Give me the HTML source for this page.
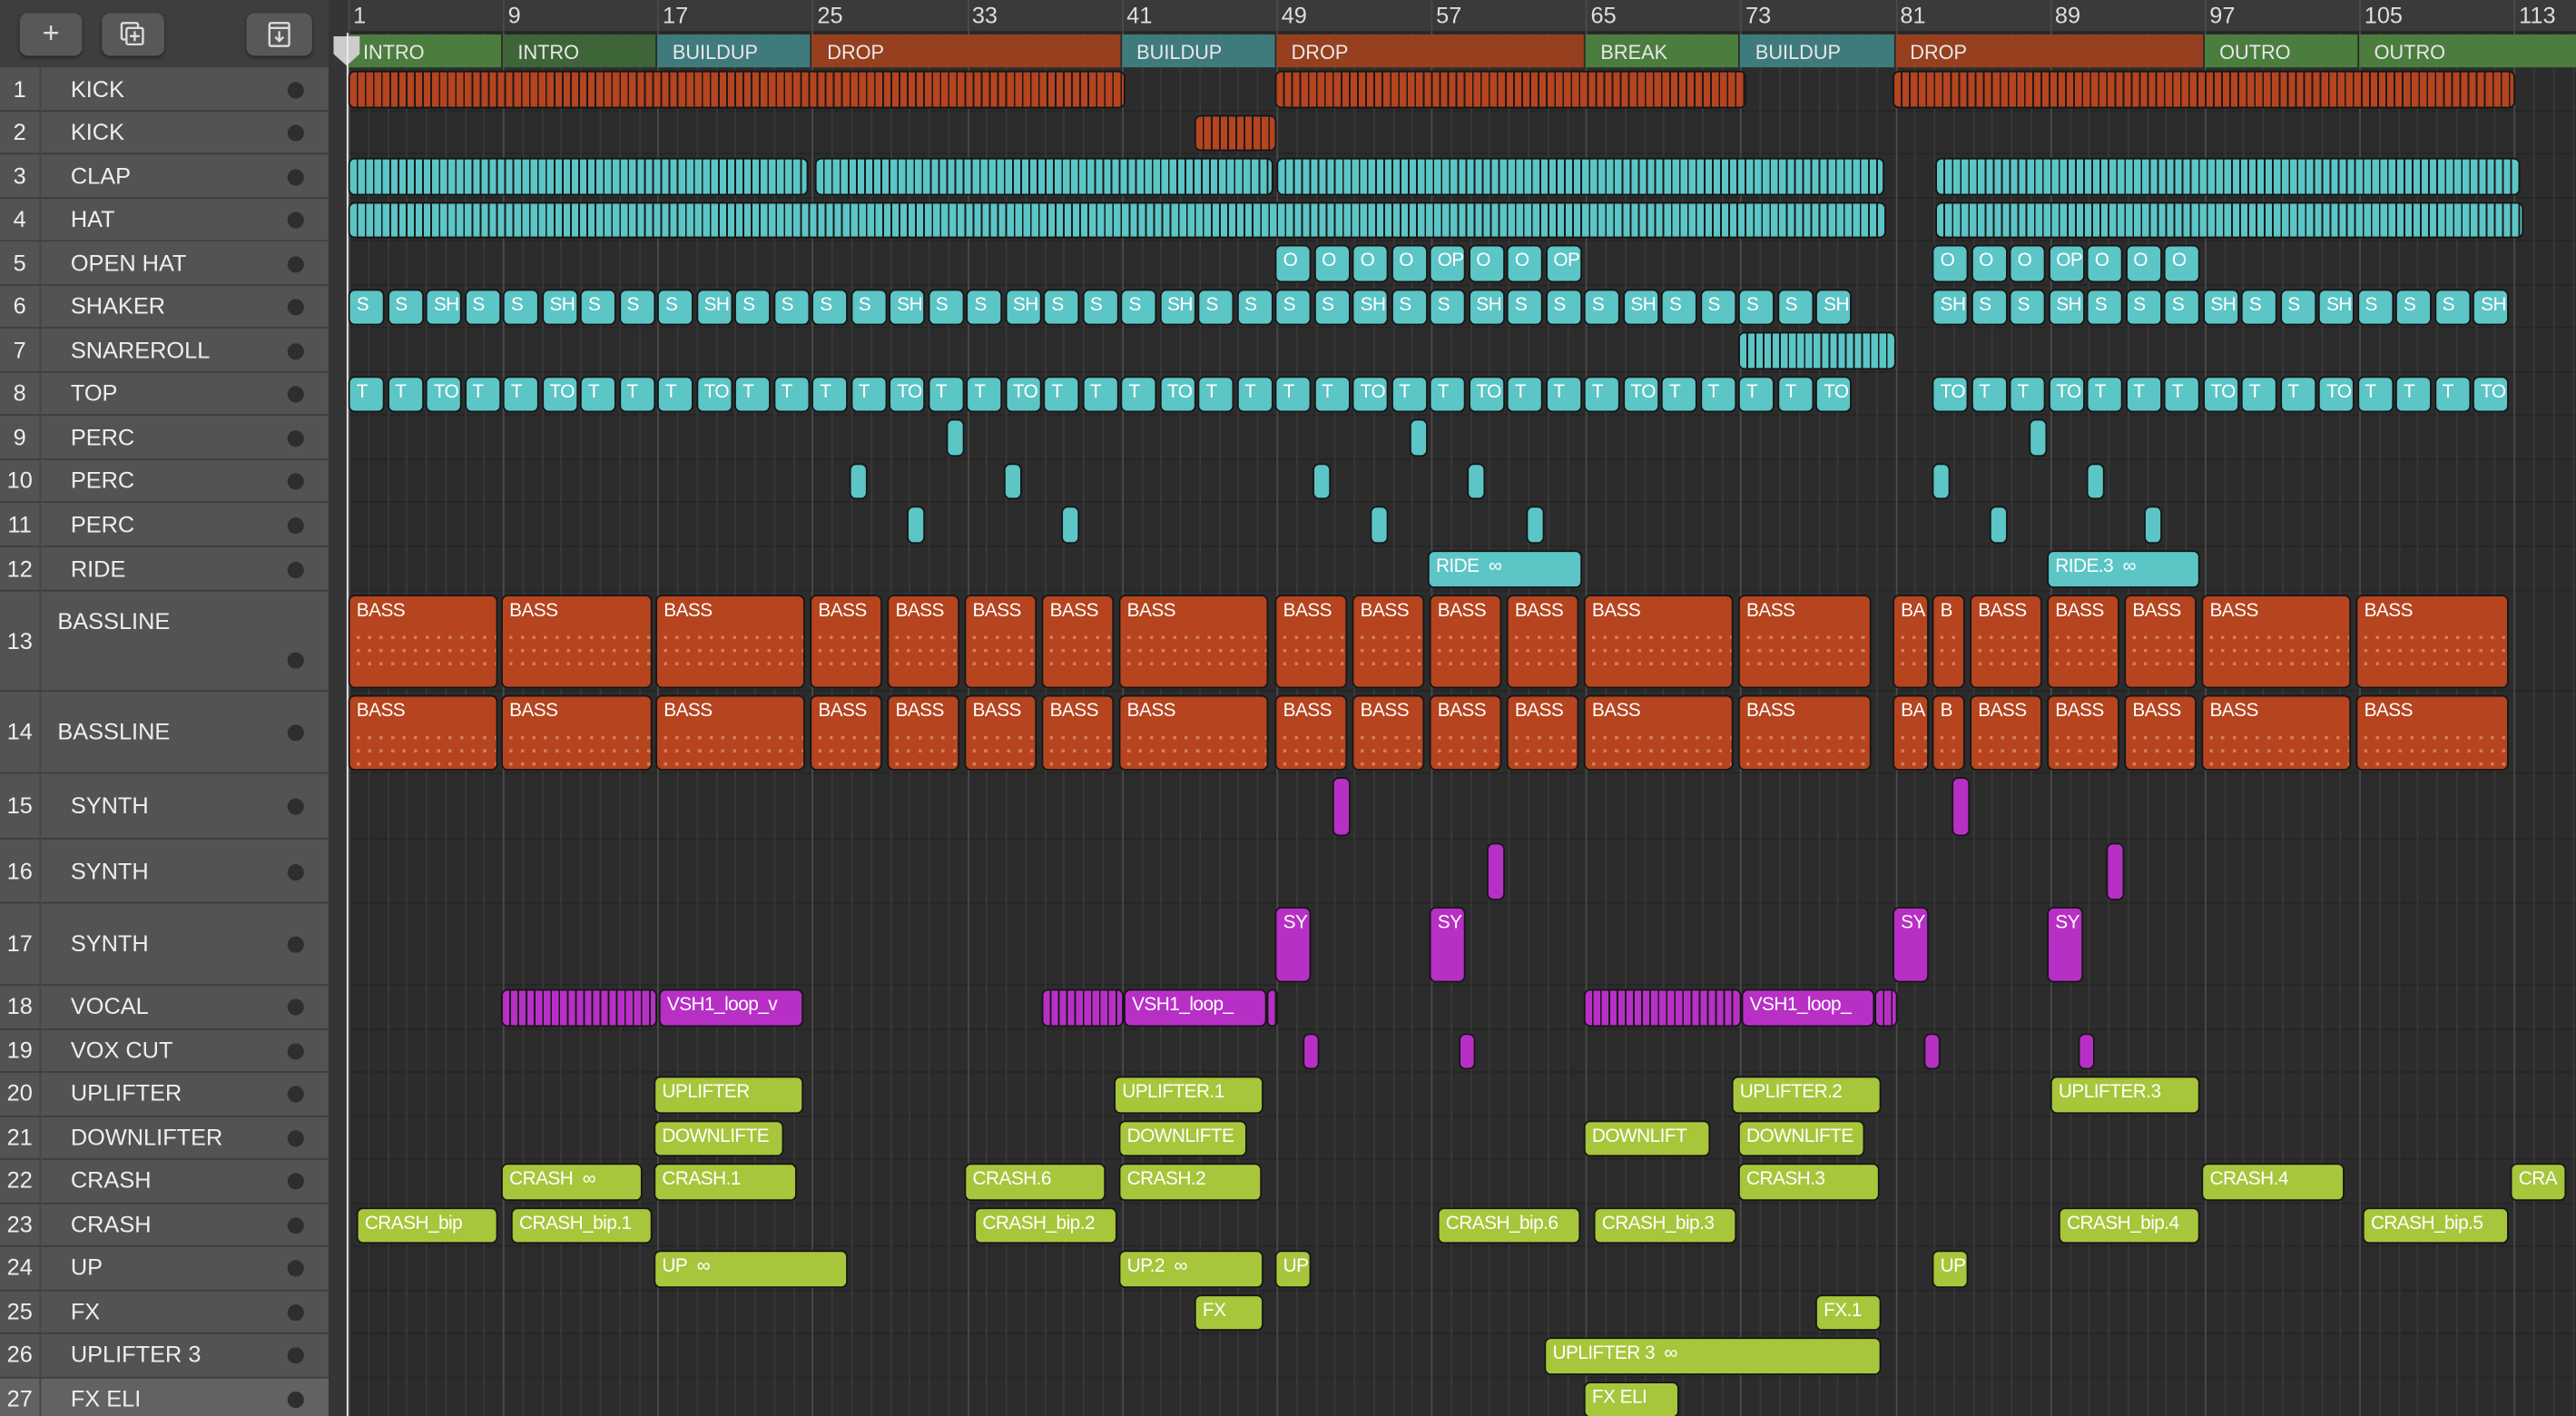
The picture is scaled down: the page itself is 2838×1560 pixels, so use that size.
<!DOCTYPE html>
<html><head><meta charset="utf-8"><style>
html,body{margin:0;padding:0;background:#2b2b2b;overflow:hidden;width:2838px;height:1560px}
#w{position:absolute;left:0;top:0;width:1568px;height:862px;transform:scale(1.81);transform-origin:0 0;font-family:"Liberation Sans",sans-serif;background:#2c2c2c;overflow:hidden}
.a{position:absolute;box-sizing:border-box}
.tn{color:#eee;font-size:14px}
.c{position:absolute;box-sizing:border-box;border:1px solid #161616;border-radius:4px;color:#fff;font-size:11.5px;letter-spacing:-0.3px;padding:2px 0 0 4px;white-space:nowrap;overflow:hidden;line-height:14px}
.btn{position:absolute;top:8px;height:26px;background:#585858;border-radius:5px;box-shadow:0 1px 2px #222;color:#ddd;text-align:center;font-size:18px;line-height:25px}
</style></head><body><div id="w">
<div class="a" style="left:0;top:0;width:200px;height:42px;background:#3e3e3e"></div>
<div class="btn" style="left:12px;width:38px">+</div>
<div class="btn" style="left:62px;width:38px"><svg width="18" height="16" viewBox="0 0 18 16" style="margin-top:5px"><rect x="2" y="1" width="10" height="10" rx="1" fill="none" stroke="#ddd" stroke-width="1.3"/><rect x="5" y="4" width="10" height="10" rx="1" fill="#585858" stroke="#ddd" stroke-width="1.3"/><path d="M10 6v6M7 9h6" stroke="#ddd" stroke-width="1.3"/></svg></div>
<div class="btn" style="left:150px;width:40px"><svg width="16" height="16" viewBox="0 0 16 16" style="margin-top:5px"><rect x="2" y="1" width="12" height="14" rx="1" fill="none" stroke="#ddd" stroke-width="1.3"/><path d="M2 4h12M8 6v6M5.5 9.5L8 12l2.5-2.5" fill="none" stroke="#ddd" stroke-width="1.3"/></svg></div>
<div class="a" style="left:200px;top:0;width:12px;height:862px;background:#353535"></div>
<div class="a" style="left:212px;top:0;width:1356px;height:20px;background:#3a3a3a;border-bottom:1px solid #222"></div>
</div>
<script>
const W=document.getElementById('w');
function el(h){W.insertAdjacentHTML('beforeend',h);}
const bx=b=>212+(b-1)*11.77;
const rows=[[1,'KICK',41,68],[2,'KICK',68,94],[3,'CLAP',94,121],[4,'HAT',121,147],[5,'OPEN HAT',147,174],[6,'SHAKER',174,200],[7,'SNAREROLL',200,227],[8,'TOP',227,253],[9,'PERC',253,280],[10,'PERC',280,306],[11,'PERC',306,333],[12,'RIDE',333,360],[13,'BASSLINE',360,421],[14,'BASSLINE',421,471],[15,'SYNTH',471,511],[16,'SYNTH',511,550],[17,'SYNTH',550,600]];
let y=600;const more=['VOCAL','VOX CUT','UPLIFTER','DOWNLIFTER','CRASH','CRASH','UP','FX','UPLIFTER 3','FX ELI'];
more.forEach((n,i)=>{rows.push([18+i,n,y,y+26.5]);y+=26.5;});
const R={};
rows.forEach(r=>{R[r[0]]=[r[2],r[3]];const h=r[3]-r[2];const ly=r[0]==13?(r[2]+10):(r[2]+h/2-9);
el(`<div class="a" style="left:0;top:${r[2]}px;width:200px;height:${h}px;background:${r[0]==27?'#626262':'#535353'};border-bottom:1px solid #3e3e3e"></div>
<div class="a" style="left:24px;top:${r[2]}px;width:1px;height:${h}px;background:#444"></div>
<div class="a tn" style="left:0;width:24px;text-align:center;top:${r[2]+h/2-9}px">${r[0]}</div>
<div class="a tn" style="left:${r[0]==13||r[0]==14?35:43}px;top:${ly}px">${r[1]}</div>
<div class="a" style="left:175px;top:${(r[0]==13?r[3]-24:r[2]+h/2-5)}px;width:10px;height:10px;border-radius:50%;background:#2e2e2e"></div>
<div class="a" style="left:212px;top:${r[3]-1}px;width:1356px;height:1px;background:#252525"></div>`);});
for(let b=1;b<=116;b++){const x=bx(b);el(`<div class="a" style="left:${x}px;top:${b%8==1?0:20}px;width:1px;height:862px;background:${b%8==1?'#4a4a4a':'#383838'}"></div>`);
if(b%8==1)el(`<div class="a" style="left:${x+3}px;top:1px;color:#ddd;font-size:14px">${b}</div>`);}
const sec=[[1,9,'INTRO','#4b7d3e'],[9,17,'INTRO','#3d6537'],[17,25,'BUILDUP','#3f7b7c'],[25,41,'DROP','#97401f'],[41,49,'BUILDUP','#3f7b7c'],[49,65,'DROP','#97401f'],[65,73,'BREAK','#4b7d3e'],[73,81,'BUILDUP','#3f7b7c'],[81,97,'DROP','#97401f'],[97,105,'OUTRO','#4b7d3e'],[105,117,'OUTRO','#4b7d3e']];
sec.forEach(s=>{const x=bx(s[0]),w=bx(s[1])-x;el(`<div class="a" style="left:${x}px;top:21px;width:${w}px;height:20px;background:${s[3]};border-right:1px solid #2a2a2a;color:#e8e8e8;font-size:12px;padding:4px 0 0 9px;white-space:nowrap;overflow:hidden">${s[2]}</div>`);});
el(`<div class="a" style="left:203px;top:22px;width:16px;height:18px;background:#ccc;clip-path:polygon(0 0,100% 0,100% 60%,50% 100%,0 60%)"></div><div class="a" style="left:211px;top:20px;width:1px;height:842px;background:#eee"></div>`);
const C={o:'#b5441f',c:'#5cc5c6',m:'#b82fc6',l:'#a7c63b'};
function clip(r,x1,x2,col,lab,stripes){const [t,b]=R[r];let s='';
if(stripes){s=`background:repeating-linear-gradient(90deg,${C[col]} 0 4px,#1a1a1a 4px 5px);`}else s=`background:${C[col]};`;
el(`<div class="c" style="left:${x1}px;top:${t+2}px;width:${x2-x1}px;height:${b-t-4}px;${s}">${lab||''}</div>`);}
[[212,685],[776,1063],[1152,1531]].forEach(a=>clip(1,a[0],a[1],'o','',1));clip(2,727,777,'o','',1);
[[212,492],[496,775],[777,1147],[1178,1534]].forEach(a=>clip(3,a[0],a[1],'c','',1));
[[212,1148],[1178,1536]].forEach(a=>clip(4,a[0],a[1],'c','',1));
clip(7,1058,1154,'c','',1);
const oh=['O','O','O','O','OP','O','O','OP'];oh.forEach((l,i)=>clip(5,776+i*23.5,776+i*23.5+22,'c',l));
['O','O','O','OP','O','O','O'].forEach((l,i)=>clip(5,1176+i*23.5,1176+i*23.5+22,'c',l));
function seq(r,x1,x2,pat){let i=0;for(let x=x1;x+20<x2+2;x+=23.5,i++)clip(r,x,x+22,'c',pat[i%pat.length]);}
seq(6,212,1138,['S','S','SH','S','S','SH','S','S','S','SH','S','S']);seq(6,1176,1528,['SH','S','S','SH','S','S','S']);
seq(8,212,1138,['T','T','TO','T','T','TO','T','T','T','TO','T','T']);seq(8,1176,1528,['TO','T','T','TO','T','T','T']);
[576,858,1235].forEach(x=>clip(9,x,x+11,'c'));[517,611,799,893,1176,1270].forEach(x=>clip(10,x,x+11,'c'));[552,646,834,929,1211,1305].forEach(x=>clip(11,x,x+11,'c'));
clip(12,869,963,'c','RIDE&nbsp; ∞');clip(12,1246,1339,'c','RIDE.3&nbsp; ∞');
const bass=[[212,303],[305,397],[399,490],[493,537],[540,584],[587,631],[634,678],[681,772],[776,820],[823,867],[870,914],[917,961],[964,1055],[1058,1139],[1152,1174,'BA'],[1176,1196,'B'],[1199,1243],[1246,1290],[1293,1337],[1340,1431],[1434,1527]];
const dots='<div style="margin-top:8px;height:20px;background:repeating-linear-gradient(90deg,#f0a080 0 2px,transparent 2px 7px);opacity:.6;-webkit-mask:repeating-linear-gradient(180deg,#000 0 2px,transparent 2px 8px)"></div>';
bass.forEach(a=>{clip(13,a[0],a[1],'o',(a[2]||'BASS')+dots);clip(14,a[0],a[1],'o',(a[2]||'BASS')+dots);});
clip(15,811,822,'m');clip(15,1188,1199,'m');clip(16,905,916,'m');clip(16,1282,1293,'m');
[776,870,1152,1246].forEach(x=>clip(17,x,x+22,'m','SY'));
clip(18,305,400,'m','',1);clip(18,401,489,'m','VSH1_loop_v');clip(18,634,684,'m','',1);clip(18,684,771,'m','VSH1_loop_');clip(18,771,778,'m','',1);
clip(18,964,1060,'m','',1);clip(18,1060,1141,'m','VSH1_loop_');clip(18,1141,1155,'m','',1);
[793,888,1171,1265].forEach(x=>clip(19,x,x+10,'m'));
[[398,489,'UPLIFTER'],[678,769,'UPLIFTER.1'],[1054,1145,'UPLIFTER.2'],[1248,1339,'UPLIFTER.3']].forEach(a=>clip(20,a[0],a[1],'l',a[2]));
[[398,477,'DOWNLIFTE'],[681,759,'DOWNLIFTE'],[964,1041,'DOWNLIFT'],[1058,1135,'DOWNLIFTE']].forEach(a=>clip(21,a[0],a[1],'l',a[2]));
[[305,391,'CRASH&nbsp; ∞'],[398,485,'CRASH.1'],[587,673,'CRASH.6'],[681,768,'CRASH.2'],[1058,1144,'CRASH.3'],[1340,1427,'CRASH.4'],[1528,1562,'CRA']].forEach(a=>clip(22,a[0],a[1],'l',a[2]));
[[217,303,'CRASH_bip'],[311,397,'CRASH_bip.1'],[593,680,'CRASH_bip.2'],[875,962,'CRASH_bip.6'],[970,1057,'CRASH_bip.3'],[1253,1339,'CRASH_bip.4'],[1438,1527,'CRASH_bip.5']].forEach(a=>clip(23,a[0],a[1],'l',a[2]));
[[398,516,'UP&nbsp; ∞'],[681,769,'UP.2&nbsp; ∞'],[776,798,'UP'],[1176,1198,'UP']].forEach(a=>clip(24,a[0],a[1],'l',a[2]));
clip(25,727,769,'l','FX');clip(25,1105,1145,'l','FX.1');clip(26,940,1145,'l','UPLIFTER 3&nbsp; ∞');clip(27,964,1022,'l','FX ELI');
</script></body></html>
